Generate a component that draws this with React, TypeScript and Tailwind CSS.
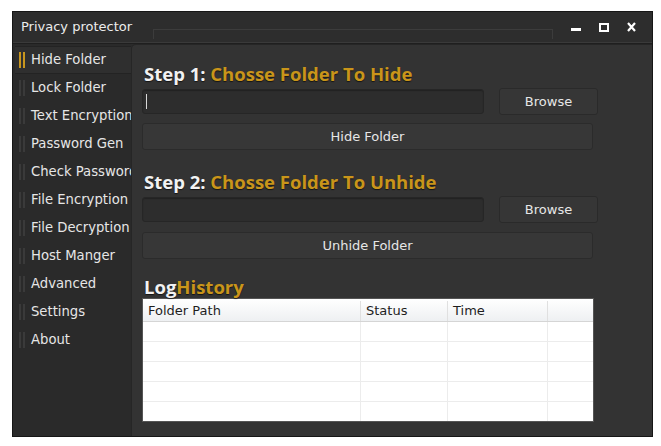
import React from "react";

const items = [
  "Hide Folder",
  "Lock Folder",
  "Text Encryption",
  "Password Gen",
  "Check Password",
  "File Encryption",
  "File Decryption",
  "Host Manger",
  "Advanced",
  "Settings",
  "About",
];

function Heading({ a, b }: { a: string; b: string }) {
  return (
    <div className="h-[22px] ml-[2px] flex items-center whitespace-pre font-['Open_Sans',sans-serif] font-bold text-[18.5px] leading-[22px] [text-shadow:0_1px_1px_rgba(0,0,0,0.6)]">
      <span className="text-[#f2f2f2]">{a}</span>
      <span className="text-[#c9951a]">{b}</span>
    </div>
  );
}

function Row({ cursor }: { cursor?: boolean }) {
  return (
    <div className="flex items-center h-[27px] gap-[15px]">
      <div className="w-[342px] h-[25px] rounded-[3px] bg-[#2d2d2d] border border-[#262626] shadow-[inset_0_1px_1px_rgba(0,0,0,0.25)] flex items-center pl-[3px]">
        {cursor && <div className="w-px h-[15px] bg-[#d8d8d8]" />}
      </div>
      <button className="w-[99px] h-[27px] rounded-[3px] bg-[#363636] border border-[#2a2a2a] text-[#e6e6e6] text-[13px] leading-none">
        Browse
      </button>
    </div>
  );
}

function WideButton({ label }: { label: string }) {
  return (
    <button className="w-[451px] h-[27px] rounded-[3px] bg-[#373737] border border-[#2b2b2b] text-[#e6e6e6] text-[13px] leading-none">
      {label}
    </button>
  );
}

export default function App() {
  return (
    <div className="w-[661px] h-[446px] bg-white pt-[11px] pl-[12px] font-['DejaVu_Sans',sans-serif] overflow-hidden">
      <div className="w-[641px] h-[426px] bg-[#2b2b2b] border border-[#161616] flex flex-col">
        {/* Title bar */}
        <div className="h-[32px] relative flex items-center bg-[#2d2d2d] border-b border-[#1f1f1f] shadow-[0_-4px_0_-3px_#3a3a3a_inset]">
          <span className="ml-[8px] -mt-[2px] text-[13px] text-[#ececec] leading-none">Privacy protector</span>
          <div className="absolute left-[140px] top-[17px] w-[400px] h-[10px] border-t border-l border-r border-[#3c3c3c]" />
          <div className="absolute right-[16px] top-[10px] flex items-center gap-[18px]">
            <div className="w-[10px] h-[10px] flex items-end pb-[1px] ml-[3px]">
              <div className="w-[10px] h-[3px] bg-white" />
            </div>
            <div className="w-[10px] h-[9px] border-2 border-white" />
            <svg width="9" height="10" viewBox="0 0 9 10">
              <path d="M1 1 L8 9 M8 1 L1 9" stroke="white" strokeWidth="2.2" />
            </svg>
          </div>
        </div>
        {/* Body */}
        <div className="flex flex-1 min-h-0">
          {/* Sidebar */}
          <div className="w-[118px] pt-[2px] bg-[#2a2a2a] overflow-hidden">
            {items.map((t, i) => {
              const sel = i === 0;
              return (
                <div
                  key={t}
                  className={
                    "h-[28px] flex items-center whitespace-nowrap ml-[2px] " +
                    (sel ? "bg-[#2f2f2f] border-y border-[#232323]" : "")
                  }
                >
                  <div className="ml-[4px] flex gap-[2px] h-[16px]">
                    <div className={"w-[2px] h-full " + (sel ? "bg-[#c8961e]" : "bg-[#3a3a3a]")} />
                    <div className={"w-[2px] h-full " + (sel ? "bg-[#c8961e]" : "bg-[#3a3a3a]")} />
                  </div>
                  <span className="ml-[6px] text-[13.2px] text-[#e6e6e6] leading-none">{t}</span>
                </div>
              );
            })}
          </div>
          {/* Content */}
          <div className="flex-1 bg-[#333333] rounded-tl-[5px] border-l border-t border-[#262626] pl-[10px] pt-[18px]">
            <Heading a="Step 1: " b="Chosse Folder To Hide" />
            <div className="mt-[3px]">
              <Row cursor />
            </div>
            <div className="mt-[8px]">
              <WideButton label="Hide Folder" />
            </div>
            <div className="mt-[21px]">
              <Heading a="Step 2: " b="Chosse Folder To Unhide" />
            </div>
            <div className="mt-[3px]">
              <Row />
            </div>
            <div className="mt-[9px]">
              <WideButton label="Unhide Folder" />
            </div>
            <div className="mt-[17px]">
              <Heading a="Log" b="History" />
            </div>
            <div className="w-[452px] h-[124px] bg-white border border-[#555] overflow-hidden">
              <div className="flex h-[23px] pt-[2px] bg-gradient-to-b from-white to-[#eef0f2] border-b border-[#d5d5d5] text-[13px] text-[#1e1e1e]">
                <div className="w-[218px] pl-[5px] flex items-center border-r border-[#e0e0e0]">Folder Path</div>
                <div className="w-[87px] pl-[5px] flex items-center border-r border-[#e0e0e0]">Status</div>
                <div className="w-[100px] pl-[5px] flex items-center border-r border-[#e0e0e0]">Time</div>
                <div className="flex-1" />
              </div>
              {[0, 1, 2, 3, 4].map((r) => (
                <div key={r} className="flex h-[20px] border-b border-[#ececec]">
                  <div className="w-[218px] border-r border-[#ececec]" />
                  <div className="w-[87px] border-r border-[#ececec]" />
                  <div className="w-[100px] border-r border-[#ececec]" />
                  <div className="flex-1" />
                </div>
              ))}
            </div>
          </div>
        </div>
      </div>
    </div>
  );
}
